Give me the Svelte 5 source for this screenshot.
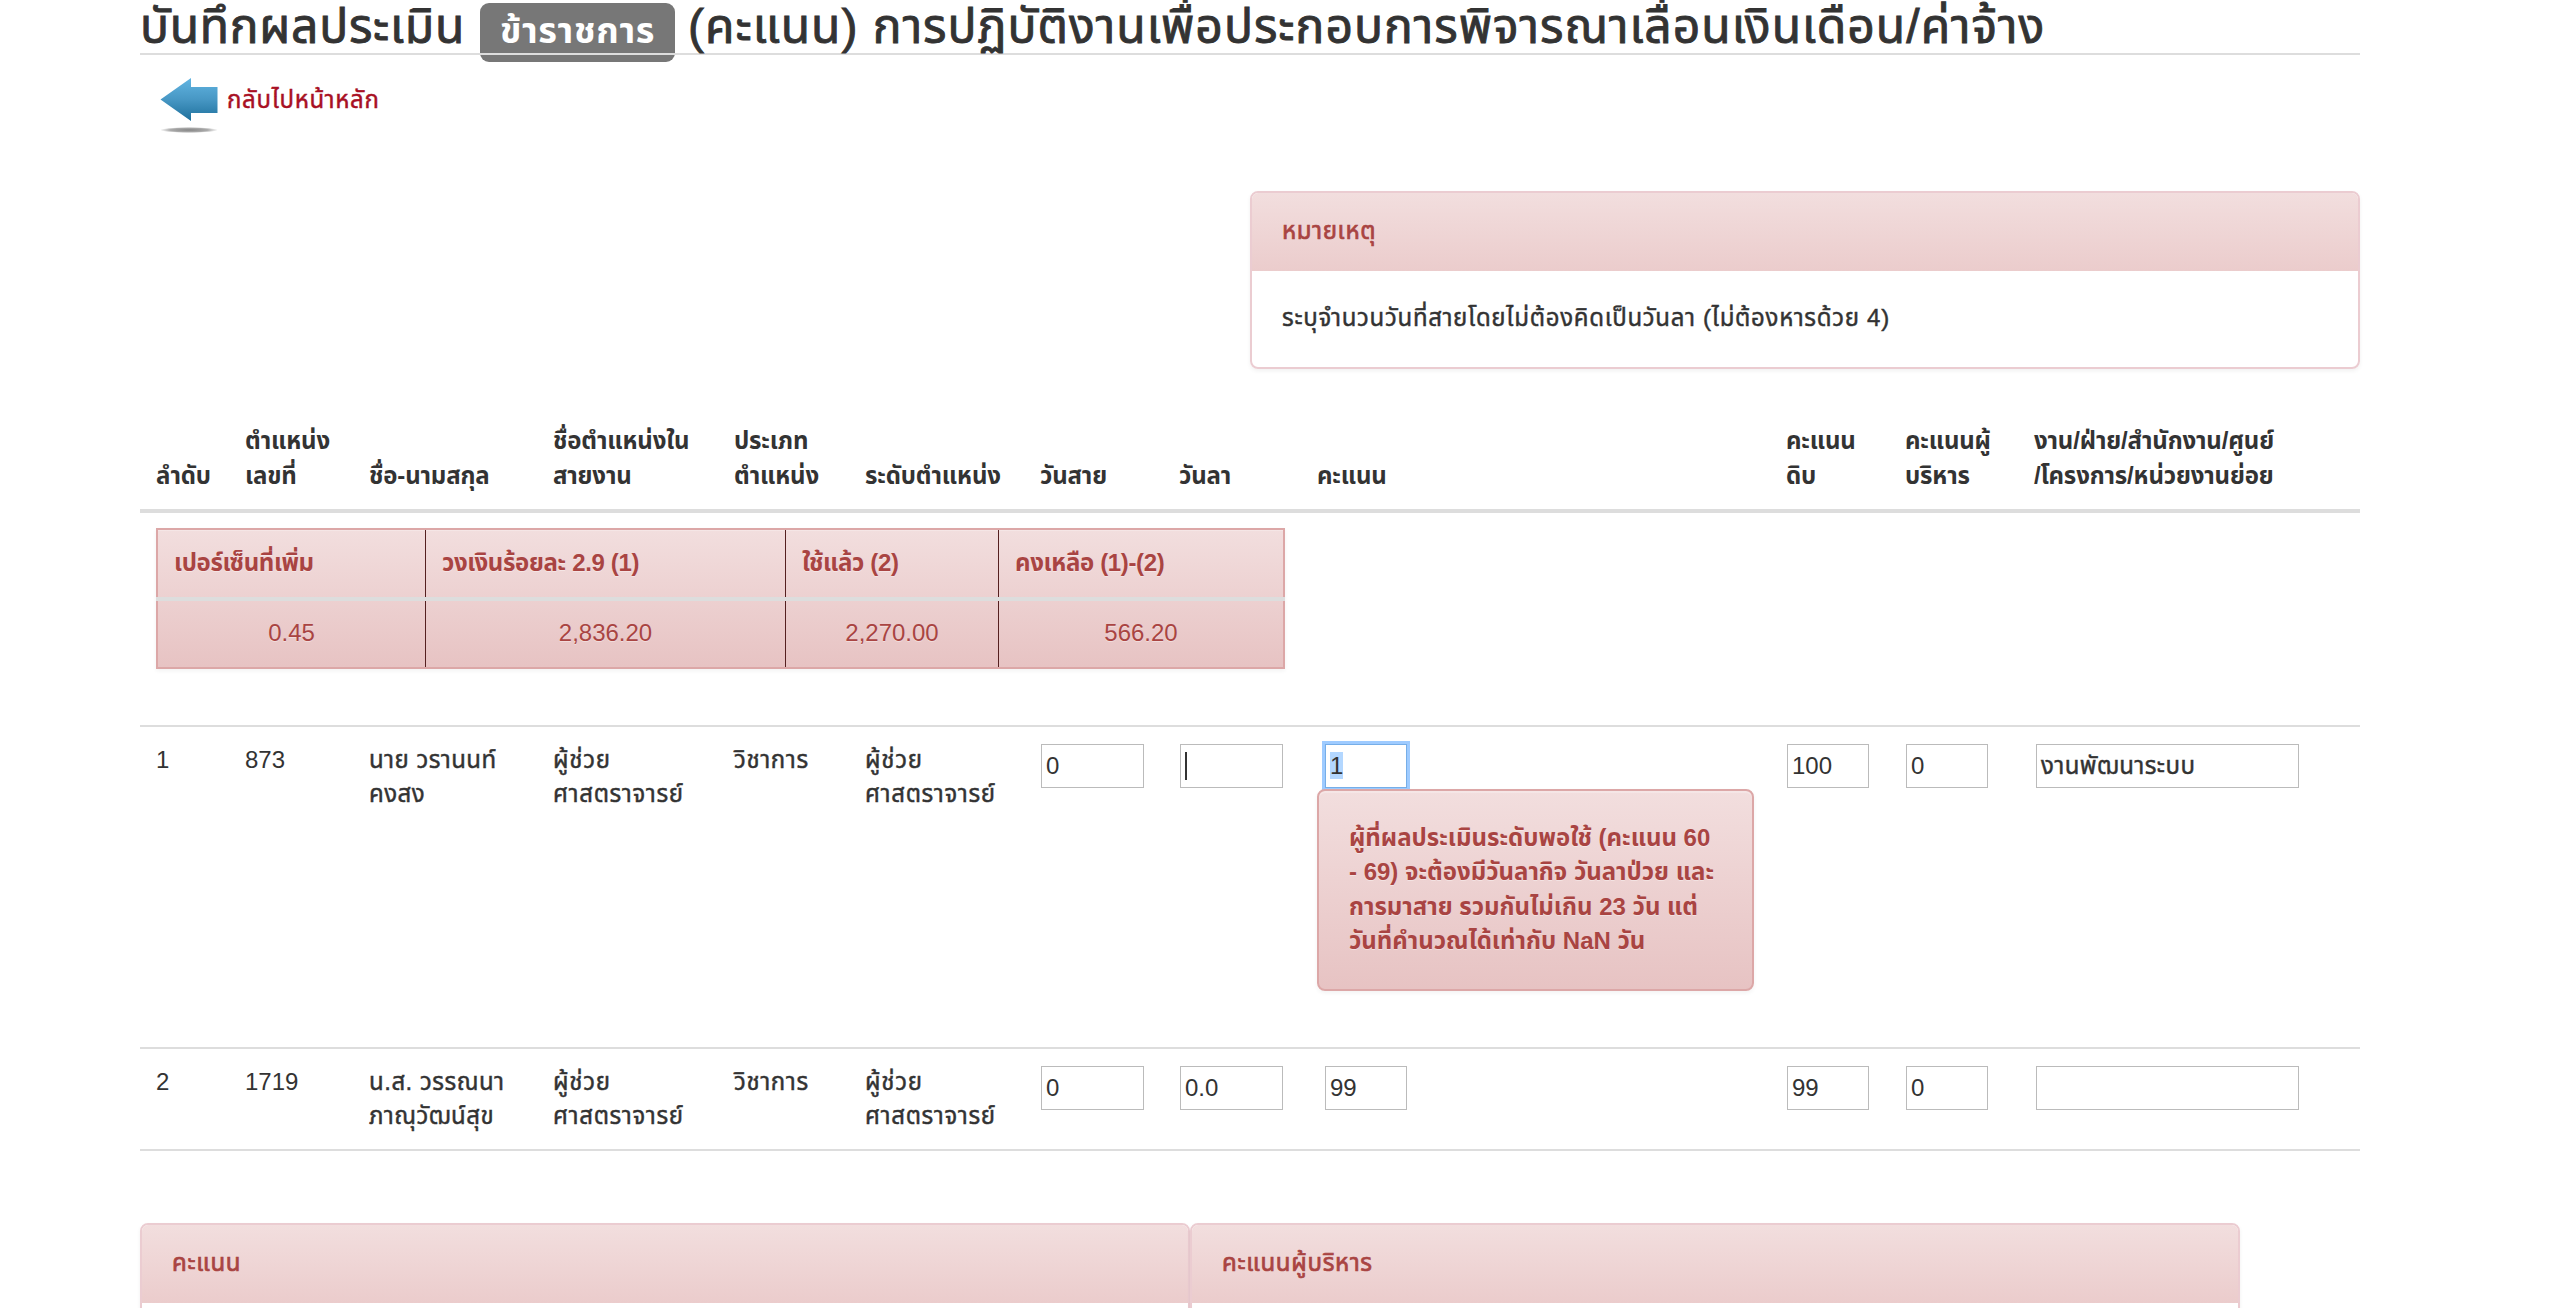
<script>
  const headers = [
    ['ลำดับ'],
    ['ตำแหน่ง', 'เลขที่'],
    ['ชื่อ-นามสกุล'],
    ['ชื่อตำแหน่งใน', 'สายงาน'],
    ['ประเภท', 'ตำแหน่ง'],
    ['ระดับตำแหน่ง'],
    ['วันสาย'],
    ['วันลา'],
    ['คะแนน'],
    ['คะแนน', 'ดิบ'],
    ['คะแนนผู้', 'บริหาร'],
    ['งาน/ฝ่าย/สำนักงาน/ศูนย์', '/โครงการ/หน่วยงานย่อย']
  ];

  const budget = [
    { label: 'เปอร์เซ็นที่เพิ่ม', value: '0.45' },
    { label: 'วงเงินร้อยละ 2.9 (1)', value: '2,836.20' },
    { label: 'ใช้แล้ว (2)', value: '2,270.00' },
    { label: 'คงเหลือ (1)-(2)', value: '566.20' }
  ];

  const people = [
    {
      no: '1', post: '873', name: ['นาย วรานนท์', 'คงสง'],
      late: '0', leave: '', score: '1', raw: '100', exec: '0', unit: 'งานพัฒนาระบบ',
      editing: true
    },
    {
      no: '2', post: '1719', name: ['น.ส. วรรณนา', 'ภาณุวัฒน์สุข'],
      late: '0', leave: '0.0', score: '99', raw: '99', exec: '0', unit: '',
      editing: false
    }
  ];

  const warning = [
    'ผู้ที่ผลประเมินระดับพอใช้ (คะแนน 60',
    '- 69) จะต้องมีวันลากิจ วันลาป่วย และ',
    'การมาสาย รวมกันไม่เกิน 23 วัน แต่',
    'วันที่คำนวณได้เท่ากับ NaN วัน'
  ];
</script>

{#snippet lines(list)}
  {#each list as line}<span class="line"><span class="t">{line}</span></span>{/each}
{/snippet}

<main>
  <h1>
    <span class="lead">บันทึกผลประเมิน</span>
    <span class="badge">ข้าราชการ</span>
    <span class="rest">(คะแนน) การปฏิบัติงานเพื่อประกอบการพิจารณาเลื่อนเงินเดือน/ค่าจ้าง</span>
  </h1>

  <a class="back" href="#main">
    <svg width="64" height="64" viewBox="0 0 64 64" aria-hidden="true">
      <defs>
        <linearGradient id="arrow" x1="0" y1="0" x2="0" y2="1">
          <stop offset="0" stop-color="#62b5e2" />
          <stop offset="0.5" stop-color="#4797c4" />
          <stop offset="1" stop-color="#1d6f9b" />
        </linearGradient>
        <radialGradient id="shade">
          <stop offset="0" stop-color="#858585" />
          <stop offset="0.65" stop-color="#aaa" />
          <stop offset="1" stop-color="#fff" />
        </radialGradient>
      </defs>
      <path d="M4.5 27.5 35 6v9h26.5v26H35v8z" fill="url(#arrow)" />
      <ellipse cx="33" cy="58" rx="29" ry="3" fill="url(#shade)" />
    </svg>
    <span class="t">กลับไปหน้าหลัก</span>
  </a>

  <section class="panel note">
    <h2><span class="t">หมายเหตุ</span></h2>
    <p><span class="t">ระบุจำนวนวันที่สายโดยไม่ต้องคิดเป็นวันลา (ไม่ต้องหารด้วย 4)</span></p>
  </section>

  <div class="grid head">
    {#each headers as h}
      <div class="cell">{@render lines(h)}</div>
    {/each}
  </div>

  <div class="budget">
    {#each budget as b}
      <div class="label"><span class="t">{b.label}</span></div>
    {/each}
    {#each budget as b}
      <div class="value">{b.value}</div>
    {/each}
  </div>

  {#each people as p}
    <div class="grid row" class:editing={p.editing}>
      <div class="cell">{p.no}</div>
      <div class="cell">{p.post}</div>
      <div class="cell name">{@render lines(p.name)}</div>
      <div class="cell">{@render lines(['ผู้ช่วย', 'ศาสตราจารย์'])}</div>
      <div class="cell">{@render lines(['วิชาการ'])}</div>
      <div class="cell">{@render lines(['ผู้ช่วย', 'ศาสตราจารย์'])}</div>
      <div class="cell"><div class="field days">{p.late}</div></div>
      <div class="cell"><div class="field days">{#if p.editing}<i class="caret"></i>{:else}{p.leave}{/if}</div></div>
      <div class="cell">
        <div class="field score" class:focused={p.editing}>
          {#if p.editing}<mark>{p.score}</mark>{:else}{p.score}{/if}
        </div>
        {#if p.editing}
          <div class="alert">{@render lines(warning)}</div>
        {/if}
      </div>
      <div class="cell"><div class="field raw">{p.raw}</div></div>
      <div class="cell"><div class="field raw">{p.exec}</div></div>
      <div class="cell"><div class="field unit"><span class="t">{p.unit}</span></div></div>
    </div>
  {/each}

  <div class="charts">
    <section class="panel"><h2><span class="t">คะแนน</span></h2></section>
    <section class="panel"><h2><span class="t">คะแนนผู้บริหาร</span></h2></section>
  </div>
</main>

<style>
  :global(body) {
    background: #fff;
    overflow: hidden;
  }

  main {
    isolation: isolate;
    box-sizing: border-box;
    width: 2560px;
    height: 1308px;
    padding: 0 200px 0 140px;
    overflow: hidden;
    color: #333;
    font-family: "Liberation Sans", "Noto Sans Thai", Loma, sans-serif;
    font-size: 24px;
    line-height: 34.28px;
    white-space: nowrap;
  }

  /* Regular Thai text is set slightly looser and darker than the Latin digits. */
  .t {
    letter-spacing: 0.7px;
    -webkit-text-stroke: 0.45px currentColor;
  }

  .name .t,
  .unit .t {
    letter-spacing: 0.5px;
  }

  .head .t,
  .label .t,
  .alert .t {
    letter-spacing: -0.15px;
    -webkit-text-stroke: 0;
  }

  .label .t {
    letter-spacing: -0.35px;
  }

  .alert .t {
    letter-spacing: 0;
  }

  h1 {
    display: grid;
    grid-template-columns: 340px 195px 1fr;
    box-sizing: border-box;
    height: 55px;
    margin: 0;
    border-bottom: 2px solid #ddd;
    font-size: 48px;
    font-weight: 400;
    line-height: 54px;
    -webkit-text-stroke: 0.9px currentColor;
  }

  .lead {
    letter-spacing: 0.7px;
  }

  .rest {
    padding-left: 13px;
    letter-spacing: 1px;
  }

  /* Sits under the heading's rule, which crosses it. */
  .badge {
    position: relative;
    z-index: -1;
    box-sizing: border-box;
    width: 195px;
    height: 59px;
    margin-top: 3px;
    border-radius: 9px;
    background: #777;
    color: #fff;
    font-size: 36px;
    font-weight: 700;
    letter-spacing: 0.7px;
    line-height: 55px;
    text-align: center;
    -webkit-text-stroke: 0;
  }

  .back {
    display: flex;
    gap: 7px;
    height: 64px;
    margin: 17px 0 0 16px;
    color: #a81024;
    line-height: 56px;
    text-decoration: none;
  }

  .panel {
    box-sizing: border-box;
    border: 2px solid #ebccd1;
    border-radius: 8px;
    box-shadow: 0 2px 4px rgba(0, 0, 0, 0.06);
    overflow: hidden;
  }

  .panel h2 {
    height: 78px;
    margin: 0;
    padding-left: 30px;
    background: linear-gradient(#f2dede, #ebcccc);
    color: #a94442;
    font-size: 24px;
    font-weight: 400;
    line-height: 75px;
  }

  .panel h2 .t {
    -webkit-text-stroke: 0.7px currentColor;
  }

  .note {
    width: 1110px;
    height: 178px;
    margin: 55px 0 0 1110px;
  }

  .note p {
    margin: 0;
    padding: 30px 30px 0;
  }

  .grid {
    display: grid;
    grid-template-columns: 89px 124px 184px 181px 131px 175px 139px 138px 469px 119px 129px 342px;
    width: 2220px;
    box-sizing: border-box;
  }

  .cell {
    padding: 16px 0 0 16px;
  }

  .line {
    display: block;
  }

  .head {
    align-items: end;
    height: 144px;
    padding-bottom: 16px;
    border-bottom: 4px solid #ddd;
    font-weight: 700;
  }

  .budget {
    position: relative;
    display: grid;
    grid-template-columns: 268px 360px 213px 284px;
    grid-template-rows: 71px 66px;
    box-sizing: border-box;
    width: 1129px;
    height: 141px;
    margin: 15px 0 56px 16px;
    border: 2px solid #dca7a7;
    background: linear-gradient(#f2dede, #e7c3c3);
    box-shadow: inset 0 1px 0 rgba(255, 255, 255, 0.25), 0 2px 4px rgba(0, 0, 0, 0.05);
    color: #a94442;
    text-shadow: 0 1px 0 rgba(255, 255, 255, 0.4);
  }

  /* The rule between labels and values runs across the outer border. */
  .budget::after {
    content: "";
    position: absolute;
    top: 67px;
    right: -2px;
    left: -2px;
    height: 4px;
    background: #ddd;
  }

  .budget > div {
    box-sizing: border-box;
    padding: 16px 16px 0;
    border-right: 1px solid #552020;
  }

  .budget > div:nth-child(4n) {
    border-right: 0;
  }

  .budget .label {
    font-weight: 700;
  }

  .budget .value {
    padding-top: 15px;
    text-align: center;
  }

  .row {
    height: 102px;
    border-top: 2px solid #ddd;
  }

  .row.editing {
    height: 322px;
  }

  .row:nth-last-child(2) {
    height: 104px;
    border-bottom: 2px solid #ddd;
  }

  .field {
    box-sizing: border-box;
    height: 44px;
    margin-top: 1px;
    padding: 0 4px;
    border: 1px solid #bbb;
    background: #fff;
    line-height: 41px;
  }

  .days {
    width: 103px;
    margin-left: 1px;
  }

  .score {
    width: 82px;
    margin-left: 8px;
  }

  .raw {
    width: 82px;
    margin-left: 1px;
  }

  .unit {
    width: 263px;
    margin-left: 2px;
  }

  .focused {
    border-color: #76aee8;
    box-shadow: 0 0 0 3px #9ecbff;
  }

  .caret {
    display: block;
    width: 2px;
    height: 28px;
    margin-top: 7px;
    background: #333;
  }

  mark {
    background: #b3d7ff;
    color: inherit;
  }

  .alert {
    position: relative;
    box-sizing: border-box;
    width: 437px;
    height: 202px;
    margin-top: 1px;
    padding: 30px;
    border: 2px solid #dca7a7;
    border-radius: 8px;
    background: linear-gradient(#f2dede, #e7c3c3);
    box-shadow: inset 0 2px 0 rgba(255, 255, 255, 0.25), 0 2px 4px rgba(0, 0, 0, 0.05);
    color: #a94442;
    font-weight: 700;
    text-shadow: 0 1px 0 rgba(255, 255, 255, 0.4);
  }

  .charts {
    display: grid;
    grid-template-columns: 1050px 1050px;
    height: 180px;
    margin-top: 72px;
  }
</style>
